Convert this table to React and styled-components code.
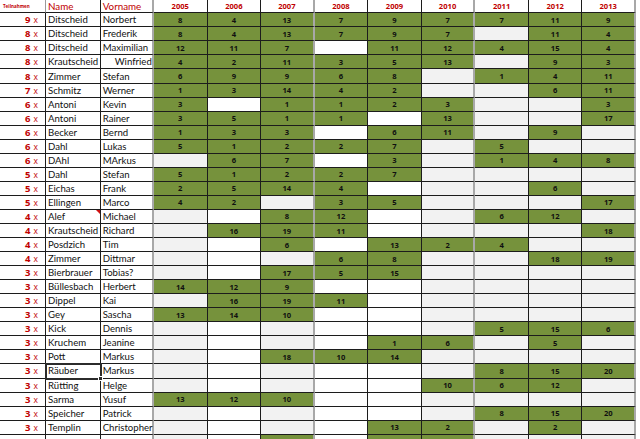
import React from "react";
import styled, { createGlobalStyle, css } from "styled-components";

const GlobalStyle = createGlobalStyle`
  html, body {
    margin: 0;
    padding: 0;
    background: #ffffff;
    overflow: hidden;
  }
  body {
    font-family: "Open Sans", "Liberation Sans", sans-serif;
  }
`;

const RED = "#C00000";
const GREEN = "#76923C";
const GREY = "#F2F2F2";
const LINE = "#1c1c1c";
const SEP = "#a8a8a8";
const TEXT_FONT = `Lato, "Open Sans", sans-serif`;

const years = [2005, 2006, 2007, 2008, 2009, 2010, 2011, 2012, 2013];
// colour of an empty cell per year column
const emptyTone = [GREY, "#ffffff", GREY, "#ffffff", "#ffffff", GREY, GREY, GREY, GREY];
// year columns followed by a heavy grey separator
const thickAfter = [2, 5, 8];

const _ = null;
const rows = [
  [9, "Ditscheid", "Norbert", [8, 4, 13, 7, 9, 7, 7, 11, 9]],
  [8, "Ditscheid", "Frederik", [8, 4, 13, 7, 9, 7, _, 11, 4]],
  [8, "Ditscheid", "Maximilian", [12, 11, 7, _, 11, 12, 4, 15, 4]],
  [8, "Krautscheid", "Winfried", [4, 2, 11, 3, 5, 13, _, 9, 3], { indent: true }],
  [8, "Zimmer", "Stefan", [6, 9, 9, 6, 8, _, 1, 4, 11]],
  [7, "Schmitz", "Werner", [1, 3, 14, 4, 2, _, _, 6, 11]],
  [6, "Antoni", "Kevin", [3, _, 1, 1, 2, 3, _, _, 3]],
  [6, "Antoni", "Rainer", [3, 5, 1, 1, _, 13, _, _, 17]],
  [6, "Becker", "Bernd", [1, 3, 3, _, 6, 11, _, 9, _]],
  [6, "Dahl", "Lukas", [5, 1, 2, 2, 7, _, 5, _, _]],
  [6, "DAhl", "MArkus", [_, 6, 7, _, 3, _, 1, 4, 8]],
  [5, "Dahl", "Stefan", [5, 1, 2, 2, 7, _, _, _, _]],
  [5, "Eichas", "Frank", [2, 5, 14, 4, _, _, _, 6, _]],
  [5, "Ellingen", "Marco", [4, 2, _, 3, 5, _, _, _, 17]],
  [4, "Alef", "Michael", [_, _, 8, 12, _, _, 6, 12, _], { comment: true }],
  [4, "Krautscheid", "Richard", [_, 16, 19, 11, _, _, _, _, 18]],
  [4, "Posdzich", "Tim", [_, _, 6, _, 13, 2, 4, _, _]],
  [4, "Zimmer", "Dittmar", [_, _, _, 6, 8, _, _, 18, 19]],
  [3, "Bierbrauer", "Tobias?", [_, _, 17, 5, 15, _, _, _, _]],
  [3, "Büllesbach", "Herbert", [14, 12, 9, _, _, _, _, _, _]],
  [3, "Dippel", "Kai", [_, 16, 19, 11, _, _, _, _, _]],
  [3, "Gey", "Sascha", [13, 14, 10, _, _, _, _, _, _]],
  [3, "Kick", "Dennis", [_, _, _, _, _, _, 5, 15, 6]],
  [3, "Kruchem", "Jeanine", [_, _, _, _, 1, 6, _, 5, _]],
  [3, "Pott", "Markus", [_, _, 18, 10, 14, _, _, _, _]],
  [3, "Räuber", "Markus", [_, _, _, _, _, _, 8, 15, 20], { selected: true }],
  [3, "Rütting", "Helge", [_, _, _, _, _, 10, 6, 12, _]],
  [3, "Sarma", "Yusuf", [13, 12, 10, _, _, _, _, _, _]],
  [3, "Speicher", "Patrick", [_, _, _, _, _, _, 8, 15, 20]],
  [3, "Templin", "Christopher", [_, _, _, _, 13, 2, _, 2, _]],
  [3, "", "", [_, _, "", _, "", "", _, _, _]],
];

const Sheet = styled.div`
  width: 640px;
  height: 439px;
  overflow: hidden;
  display: flex;
  flex-direction: column;
`;

const Row = styled.div`
  flex: none;
  display: grid;
  grid-template-columns: 46px 54.7px 53.3px repeat(9, 1fr) 4px;
  height: ${(p) => p.$height}px;
`;

const cellBase = css`
  box-sizing: border-box;
  display: flex;
  align-items: center;
  white-space: nowrap;
  border-right: 1px solid ${LINE};
  border-bottom: 1px solid ${LINE};
  min-width: 0;
`;

const HeadCount = styled.div`
  ${cellBase};
  align-items: flex-start;
  padding: 3px 0 0 3px;
  border-right-color: #9a9a9a;
  color: ${RED};
  font-size: 4.5px;
  font-weight: 700;
`;

const HeadText = styled.div`
  ${cellBase};
  padding-left: 2px;
  color: ${RED};
  font-family: ${TEXT_FONT};
  font-size: 9.8px;
  border-right: ${(p) => (p.$thick ? `2px solid ${SEP}` : `1px solid ${LINE}`)};
`;

const HeadYear = styled.div`
  ${cellBase};
  justify-content: center;
  color: ${RED};
  font-size: 7.6px;
  font-weight: 700;
  border-right: ${(p) => (p.$thick ? `2px solid ${SEP}` : `1px solid ${LINE}`)};
`;

const CountCell = styled.div`
  ${cellBase};
  justify-content: flex-end;
  padding-right: 7px;
  color: ${RED};
`;

const CountNum = styled.span`
  font-size: 9.5px;
  font-weight: 700;
`;

const CountX = styled.span`
  font-size: 8.5px;
  margin-left: 3px;
`;

const NameCell = styled.div`
  ${cellBase};
  position: relative;
  padding-left: ${(p) => (p.$indent ? 14 : 2)}px;
  font-family: ${TEXT_FONT};
  font-size: 9.6px;
  color: #111;
  border-right: ${(p) => (p.$thick ? `2px solid ${SEP}` : `1px solid ${LINE}`)};
  ${(p) =>
    p.$selected &&
    css`
      z-index: 2;
      outline: 2px solid #2b2b2b;
      outline-offset: -1px;
    `}
`;

const CommentMark = styled.span`
  position: absolute;
  top: 0;
  right: 0;
  width: 0;
  height: 0;
  border-top: 4px solid #d01010;
  border-left: 4px solid transparent;
`;

const FillHandle = styled.span`
  position: absolute;
  right: -3px;
  bottom: -3px;
  width: 3px;
  height: 3px;
  background: #2b2b2b;
  border: 1px solid #ffffff;
`;

const YearCell = styled.div`
  ${cellBase};
  justify-content: center;
  font-size: 7.6px;
  font-weight: 700;
  color: #101010;
  background: ${(p) => p.$bg};
  border-right: ${(p) => (p.$thick ? `2px solid ${SEP}` : `1px solid ${LINE}`)};
`;

const Tail = styled.div`
  background: #ffffff;
`;

const HEADER_H = 13.3;
const ROW_H = 14.06;

export default function App() {
  return (
    <>
      <GlobalStyle />
      <Sheet>
        <Row $height={HEADER_H}>
          <HeadCount>Teilnahmen</HeadCount>
          <HeadText>Name</HeadText>
          <HeadText $thick>Vorname</HeadText>
          {years.map((y, i) => (
            <HeadYear key={y} $thick={thickAfter.includes(i)}>
              {y}
            </HeadYear>
          ))}
          <Tail />
        </Row>
        {rows.map(([count, name, first, values, opts = {}], r) => (
          <Row key={r} $height={ROW_H}>
            <CountCell>
              <CountNum>{count}</CountNum>
              <CountX>x</CountX>
            </CountCell>
            <NameCell $selected={opts.selected}>
              {name}
              {opts.comment && <CommentMark />}
              {opts.selected && <FillHandle />}
            </NameCell>
            <NameCell $thick $indent={opts.indent}>
              {first}
            </NameCell>
            {values.map((v, i) => (
              <YearCell
                key={i}
                $bg={v === null ? emptyTone[i] : GREEN}
                $thick={thickAfter.includes(i)}
              >
                {v}
              </YearCell>
            ))}
            <Tail />
          </Row>
        ))}
      </Sheet>
    </>
  );
}
